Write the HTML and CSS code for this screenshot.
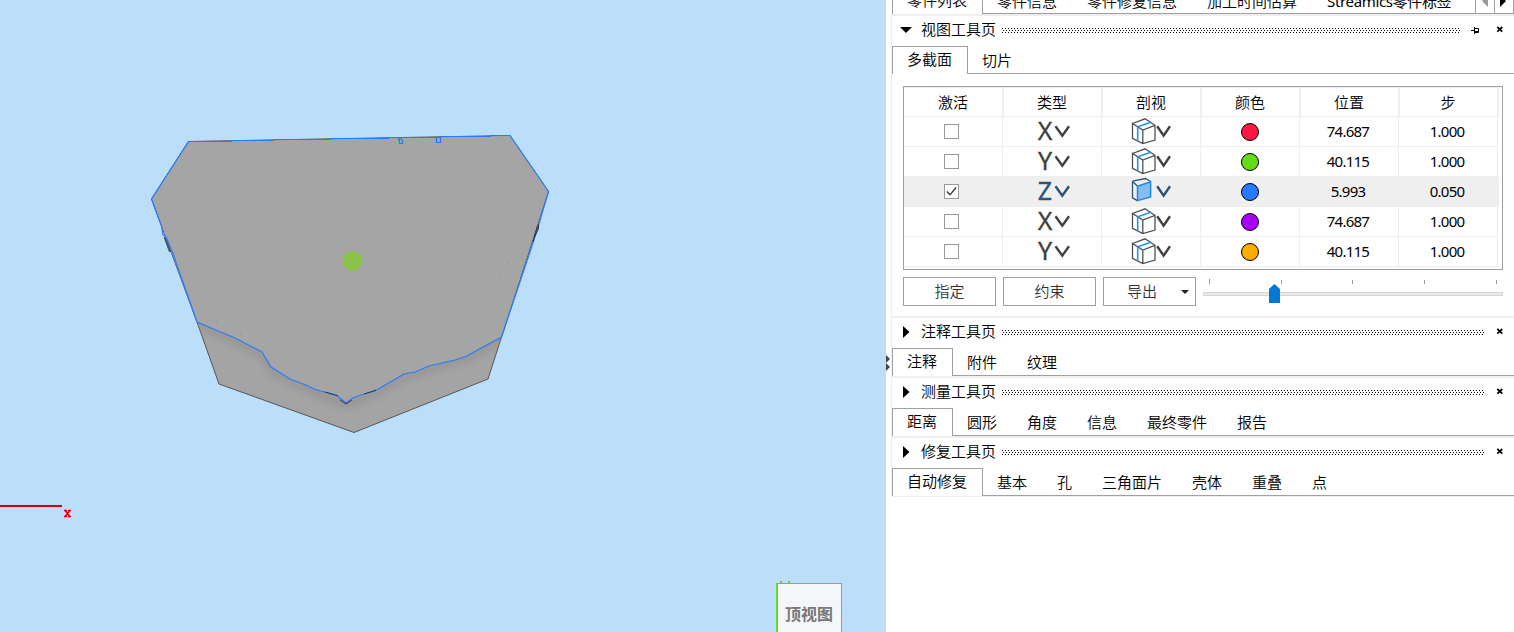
FILE: index.html
```html
<!DOCTYPE html>
<html lang="zh-CN">
<head>
<meta charset="utf-8">
<title>视图工具页</title>
<link rel="stylesheet" href="styles.css">
</head>
<body>
<svg class="defs" width="0" height="0" aria-hidden="true">
  <defs>
    <symbol id="box" viewBox="0 0 40 29">
      <path class="ink" d="M1.5 6.5 14 1.8 24 8.3V23L11.8 26.6 1.5 21.3V6.5L11.8 13 24 8.3M11.8 13V26.3"/>
      <path class="blue" d="M6.7 24V9.8L19.8 5.2"/>
      <path class="chev" d="M26.2 9.2 32.6 18.6 39 9.2"/>
    </symbol>
    <symbol id="box-active" viewBox="0 0 40 29">
      <path class="ink navy" d="M1.5 4.2 14.5 1.5 19.5 4.5M1.5 4.2V20.8L6.3 23.6M1.5 4.2 6.3 9"/>
      <path class="face" d="M6.5 9.3 19.6 4.8V20L6.5 23.6Z"/>
      <path class="chev navy" d="M26.2 9.2 32.6 18.6 39 9.2"/>
    </symbol>
    <symbol id="close" viewBox="0 0 8 7"><path class="mark" d="M1.3 1 6.3 5.6M6.3 1 1.3 5.6"/></symbol>
    <pattern id="dots" width="3" height="4" patternUnits="userSpaceOnUse">
      <path d="M0 0h1v1H0zM1 2h1v1H1z"/>
    </pattern>
  </defs>
</svg>
<div class="app">
  <main class="viewport">
    <svg class="scene" width="886" height="632">
      <defs>
        <clipPath id="body"><path d="M197 322 219 384 354 432.500 488 379 501 337 540 100 150 100Z"/></clipPath>
        <filter id="soft"><feGaussianBlur stdDeviation="4"/></filter>
      </defs>
      <path fill="#a4a4a4" stroke="#555" d="M188.500 141.500 510 135.500 548.500 191.500 501.500 337 488 379 354 432.500 219 384 197 322 151.500 199Z"/>
      <g clip-path="url(#body)">
        <path fill="none" stroke="#777" stroke-width="5" opacity=".5" filter="url(#soft)" d="M197 324 235 340 262 354 274 372 315 392 345 405 375 393 404 376 467 358 501 339"/>
      </g>
      <path fill="#a5a5a5" d="M189 142 510 136 548 191 501 337 475 351 467 356 455 360 429 366 415 372 404 374 375 391 353 398 346 403 336 395 315 389 290 379 271 367 262 352 235 338 211 328 197 322 152 199Z"/>
      <path class="cut" d="M188.500 141.500 231 141.500 232 140.500 273 140.500 274 139.500 330 139.500 331 138.500 388 138.500 389 137.500 440 137.500 441 136.500 490 136.500 491 135.500 510 135.500 548.500 191.500 538 227 533 243 501.500 337 475 351.500 467 356 455 360 429 366 415 372 404 374 387 384 375 391 361 395 353 398 346 403 336 395 315 389.500 307 385.500 290 379 271 367 262 352 235 338 211 328 197 322 172 251 166 237 163 235 161.500 226 151.500 199Z"/>
      <path class="cut" d="M398.500 138V140.500M399.500 138.500V143.500H402.500V140.500L400.500 138M436.500 137.500V142.500H440.500V137.500"/>
      <path class="burr" d="M164 237 169.500 252M165 238 170.500 252M538.500 224V229L534.500 237M537.500 226 533 242"/>
      <path class="burr" d="M325 392 338 396M364 394 376 390M340 400 346 404 352 400"/>
      <circle cx="352.500" cy="261" r="10" fill="#8bc34a"/>
      <path fill="#8a8a8a" d="M186 231h1v1h-1zM216 321h1v1h-1zM240 334h1v1h-1zM508 263h1v1h-1zM500 274h1v1h-1zM420 365h1v1h-1z"/>
      <path fill="#d40000" d="M0 505H62V507H0z"/>
      <path class="axis-x" d="M64 510.500H67M68 510.500H71M64 516.500H67M68 516.500H71M65.500 511 69.500 516M69.500 511 65.500 516"/>
      <path fill="#6d1" d="M780 581h2v2h-2zM788 581h2v2h-2z"/>
    </svg>
    <div class="viewcube">顶视图</div>
  </main>
  <div class="splitter"><svg width="5" height="16"><path d="M0 0 4 4 0 8ZM0 8 4 12 0 16Z"/></svg></div>
  <aside class="panel">
    <nav class="tabs top">
      <span class="tab on">零件列表</span><span class="tab">零件信息</span><span class="tab">零件修复信息</span><span class="tab">加工时间估算</span><span class="tab stream">Streamics零件标签</span>
      <div class="scroller">
        <span><svg width="18" height="14"><path fill="#999" d="M12 0V12L6 6z"/></svg></span><span><svg width="18" height="14"><path d="M5 0V12L11 6z"/></svg></span>
      </div>
    </nav>
    <section class="block">
      <header class="head"><svg class="arrow" width="12" height="12"><path d="M0 3H12L6 9z"/></svg><h2>视图工具页</h2><svg class="grip" height="5"><rect width="100%" height="5" fill="url(#dots)"/></svg><svg class="pin" width="9" height="7"><path fill="none" stroke="#000" d="M0 3.500H3M3.500 0V7M4 1.500H7.500V5.500H4M4 4.500H7"/></svg><svg class="close" width="8" height="7"><use href="#close"/></svg></header>
      <nav class="tabs"><span class="tab on">多截面</span><span class="tab">切片</span></nav>
      <div class="content">
        <div class="grid">
          <div class="row title"><span>激活</span><span>类型</span><span>剖视</span><span>颜色</span><span>位置</span><span>步</span></div>
          <div class="row"><span><i class="check"></i></span><span class="type"><b>X</b><svg width="16" height="29"><path class="chev" d="M1.500 9.200 8.300 18.600 15 9.200"/></svg></span><span><svg width="40" height="29"><use href="#box"/></svg></span><span><svg width="18" height="18"><circle class="dot" cx="9" cy="9" r="8.500" fill="#ff1744"/></svg></span><span class="num">74.687</span><span class="num">1.000</span></div>
          <div class="row"><span><i class="check"></i></span><span class="type"><b>Y</b><svg width="16" height="29"><path class="chev" d="M1.500 9.200 8.300 18.600 15 9.200"/></svg></span><span><svg width="40" height="29"><use href="#box"/></svg></span><span><svg width="18" height="18"><circle class="dot" cx="9" cy="9" r="8.500" fill="#64dd17"/></svg></span><span class="num">40.115</span><span class="num">1.000</span></div>
          <div class="row sel"><span><i class="check"><svg width="13" height="13"><path fill="none" stroke="#333" stroke-width="1.300" d="M2 6.500 5 9.800 11 2.500"/></svg></i></span><span class="type"><b>Z</b><svg width="16" height="29"><path class="chev navy" d="M1.500 9.200 8.300 18.600 15 9.200"/></svg></span><span><svg width="40" height="29"><use href="#box-active"/></svg></span><span><svg width="18" height="18"><circle class="dot" cx="9" cy="9" r="8.500" fill="#2979ff"/></svg></span><span class="num">5.993</span><span class="num">0.050</span></div>
          <div class="row"><span><i class="check"></i></span><span class="type"><b>X</b><svg width="16" height="29"><path class="chev" d="M1.500 9.200 8.300 18.600 15 9.200"/></svg></span><span><svg width="40" height="29"><use href="#box"/></svg></span><span><svg width="18" height="18"><circle class="dot" cx="9" cy="9" r="8.500" fill="#aa00ff"/></svg></span><span class="num">74.687</span><span class="num">1.000</span></div>
          <div class="row"><span><i class="check"></i></span><span class="type"><b>Y</b><svg width="16" height="29"><path class="chev" d="M1.500 9.200 8.300 18.600 15 9.200"/></svg></span><span><svg width="40" height="29"><use href="#box"/></svg></span><span><svg width="18" height="18"><circle class="dot" cx="9" cy="9" r="8.500" fill="#ffab00"/></svg></span><span class="num">40.115</span><span class="num">1.000</span></div>
        </div>
        <div class="actions">
          <button>指定</button><button>约束</button><button class="drop">导出<svg width="8" height="4"><path fill="#222" d="M0 0H8L4 4z"/></svg></button>
          <svg class="slider" width="300" height="29">
            <path fill="#999" d="M6 2h1v5H6zM78 3h1v4h-1zM149 3h1v4h-1zM221 3h1v4h-1zM293 3h1v4h-1z"/>
            <rect x=".5" y="15.500" width="299" height="3" fill="#e7eaea" stroke="#d6d6d6"/>
            <path fill="#0078d7" d="M66 12 71.500 7 77 12V26H66z"/>
          </svg>
        </div>
      </div>
    </section>
    <section class="block">
      <header class="head"><svg class="arrow" width="12" height="12"><path d="M3 0V12L9.500 6z"/></svg><h2>注释工具页</h2><svg class="grip" height="5"><rect width="100%" height="5" fill="url(#dots)"/></svg><svg class="close" width="8" height="7"><use href="#close"/></svg></header>
      <nav class="tabs"><span class="tab on">注释</span><span class="tab">附件</span><span class="tab">纹理</span></nav>
    </section>
    <section class="block">
      <header class="head"><svg class="arrow" width="12" height="12"><path d="M3 0V12L9.500 6z"/></svg><h2>测量工具页</h2><svg class="grip" height="5"><rect width="100%" height="5" fill="url(#dots)"/></svg><svg class="close" width="8" height="7"><use href="#close"/></svg></header>
      <nav class="tabs"><span class="tab on">距离</span><span class="tab">圆形</span><span class="tab">角度</span><span class="tab">信息</span><span class="tab">最终零件</span><span class="tab">报告</span></nav>
    </section>
    <section class="block last">
      <header class="head"><svg class="arrow" width="12" height="12"><path d="M3 0V12L9.500 6z"/></svg><h2>修复工具页</h2><svg class="grip" height="5"><rect width="100%" height="5" fill="url(#dots)"/></svg><svg class="close" width="8" height="7"><use href="#close"/></svg></header>
      <nav class="tabs"><span class="tab on">自动修复</span><span class="tab">基本</span><span class="tab">孔</span><span class="tab">三角面片</span><span class="tab">壳体</span><span class="tab">重叠</span><span class="tab">点</span></nav>
    </section>
  </aside>
</div>
</body>
</html>
```
FILE: styles.css
```css
* { box-sizing: border-box; }
body { margin: 0; overflow: hidden; background: #fff; color: #000; font: 350 15px/20px "Noto Sans CJK SC", sans-serif; }
svg { display: block; flex: none; }
.defs { position: absolute; }
.app { display: flex; height: 632px; overflow: hidden; }

.viewport { position: relative; flex: none; width: 886px; background: #bbdefb; overflow: hidden; }
.cut { fill: none; stroke: #2979ff; stroke-width: 1.2; }
.burr { fill: none; stroke: #222; stroke-width: 1; opacity: .75; }
.axis-x { fill: none; stroke: #d40000; stroke-width: 1.4; }
.viewcube { position: absolute; left: 776px; top: 583px; width: 66px; height: 60px; padding: 19px 0 0 7px; border: 1px solid #999da3; border-left: 2px solid #64dd17; background: #f5f6fa; color: #777; font-size: 16px; font-weight: 700; }

.splitter { display: flex; flex: none; width: 5px; padding-top: 355px; fill: #444; }
.panel { display: flex; flex: none; flex-direction: column; width: 623px; margin-top: -14px; }

.tabs { display: flex; flex: none; height: 28px; border-bottom: 1px solid #a0a0a0; margin-left: 1px; }
.tab { flex: none; padding: 4px 15px 0; white-space: nowrap; }
.tab.on { height: 28px; margin-right: -1px; padding: 2px 15px 0 14px; border: 1px solid #a0a0a0; border-bottom: 0; background: #fff; }
.top .tab { padding-top: 5px; }
.top .tab.on { padding-top: 3px; }
.top .stream { width: 153px; padding-right: 0; overflow: hidden; font-family: "Noto Sans", "Noto Sans CJK SC", sans-serif; font-weight: 400; letter-spacing: -.35px; }
.scroller { display: flex; margin-left: auto; }
.scroller span { width: 19px; padding-top: 9px; border-left: 1px solid #a0a0a0; }
.scroller span:last-child { width: 20px; border-right: 1px solid #a0a0a0; }

.block { flex: none; border-top: 2px solid #eee; border-left: 1px solid #eee; }
.block .tabs { margin-left: 0; }
.last { border-bottom: 1px solid #eee; }
.head { display: flex; align-items: center; height: 30px; padding: 0 10px 2px 8px; }
.head h2 { flex: none; width: 75px; margin: -2px 6px 0 9px; font-size: 15px; font-weight: inherit; line-height: 20px; }
.grip { flex: 1; width: 0; min-width: 0; margin-right: 11px; }
.pin { margin-right: 16px; }
.close { margin-top: -1px; }
.mark { fill: none; stroke: #000; stroke-width: 1.7; }

.content { display: flex; flex-direction: column; gap: 7px; height: 242px; padding: 12px 11px 0; }
.grid { width: 600px; height: 184px; border: 1px solid #a0a0a0; padding-right: 3px; }
.row { display: grid; grid-template-columns: repeat(6, 99px); height: 30px; }
.row > span { display: flex; align-items: center; justify-content: center; height: 30px; border-right: 1px solid #eee; border-bottom: 1px solid #eee; }
.row.title > span { border-top: 1px solid #eee; box-shadow: 1px 0 #eee; }
.row.sel { background: #efefef; }
.check { width: 15px; height: 15px; margin-right: 3px; border: 1px solid #999; background: #fff; }
.type b { width: 17px; margin: -4px 0 0 2px; color: #404040; text-align: center; font: 400 25px/24px "Noto Sans", sans-serif; -webkit-text-stroke: .3px; }
.sel .type b { color: #2b5378; }
.row > .num { padding: 0 2px 2px 0; font-family: "Noto Sans", sans-serif; font-weight: 400; font-size: 15px; letter-spacing: -.75px; }
.ink { fill: none; stroke: #505050; stroke-width: 1.3; }
.blue { fill: none; stroke: #2196f3; stroke-width: 1.6; }
.face { fill: #85bdf0; stroke: #1e88e5; stroke-width: 1.5; }
.chev { fill: none; stroke: #404040; stroke-width: 2.4; }
.chev.navy, .ink.navy { stroke: #2b5378; }
.dot { stroke: #000; }

.actions { display: flex; }
button { position: relative; width: 93px; height: 29px; margin-right: 7px; padding: 0 0 1px; border: 1px solid #a0a0a0; background: #fff; color: #333; font: 350 15px/20px "Noto Sans CJK SC", sans-serif; }
.drop { padding-right: 15px; }
.drop svg { position: absolute; right: 6px; top: 12px; }
```
